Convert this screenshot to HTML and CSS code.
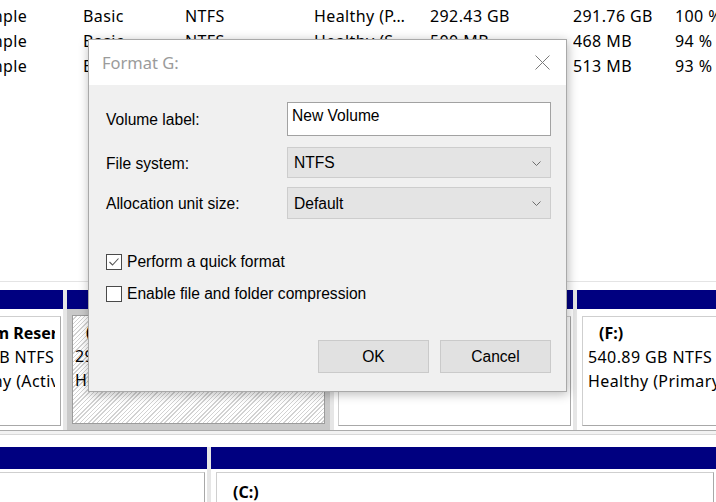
FILE: index.html
```html
<!DOCTYPE html>
<html lang="en">
<head>
<meta charset="utf-8">
<title>Format G:</title>
<link rel="stylesheet" href="styles.css">
</head>
<body>
<div class="screen">
  <div class="vol-list">
    <div class="vol-row"><span>Simple</span><span>Basic</span><span>NTFS</span><span>Healthy (P…</span><span>292.43 GB</span><span>291.76 GB</span><span>100 %</span></div>
    <div class="vol-row"><span>Simple</span><span>Basic</span><span>NTFS</span><span>Healthy (S…</span><span>500 MB</span><span>468 MB</span><span>94 %</span></div>
    <div class="vol-row"><span>Simple</span><span>Basic</span><span>NTFS</span><span>Healthy (R…</span><span>549 MB</span><span>513 MB</span><span>93 %</span></div>
  </div>

  <div class="disk-area">
    <div class="disk-row disk-row-1">
      <div class="part part-sys">
        <div class="part-head"></div>
        <div class="part-body">
          <div class="part-box">
            <div class="p-name">System Reserved</div>
            <div class="p-line">549 MB NTFS</div>
            <div class="p-line">Healthy (Active, Primary Partition)</div>
          </div>
        </div>
      </div>
      <div class="part part-g">
        <div class="part-head"></div>
        <div class="part-body part-body-sel">
          <div class="part-box part-box-hatch">
            <div class="p-name p-indent">(G:)</div>
            <div class="p-line">292.43 GB NTFS</div>
            <div class="p-line">Healthy (Primary Partition)</div>
          </div>
        </div>
      </div>
      <div class="part part-h">
        <div class="part-head"></div>
        <div class="part-body">
          <div class="part-box"></div>
        </div>
      </div>
      <div class="part part-f">
        <div class="part-head"></div>
        <div class="part-body">
          <div class="part-box">
            <div class="p-name p-indent">(F:)</div>
            <div class="p-line">540.89 GB NTFS</div>
            <div class="p-line">Healthy (Primary Partition)</div>
          </div>
        </div>
      </div>
    </div>
    <div class="disk-sep"></div>
    <div class="disk-row disk-row-2">
      <div class="part part-left">
        <div class="part-head"></div>
        <div class="part-body">
          <div class="part-box"></div>
        </div>
      </div>
      <div class="part part-c">
        <div class="part-head"></div>
        <div class="part-body">
          <div class="part-box">
            <div class="p-name p-indent">(C:)</div>
          </div>
        </div>
      </div>
    </div>
  </div>

  <div class="dialog">
    <div class="dlg-title">
      <span class="dlg-title-text">Format G:</span>
      <svg class="dlg-close" width="15" height="15" viewBox="0 0 15 15"><path d="M0.5 0.5L14.5 14.5M14.5 0.5L0.5 14.5" stroke="#7a7a7a" stroke-width="1" fill="none"/></svg>
    </div>
    <div class="dlg-body">
      <div class="form-row row-1">
        <span class="form-label">Volume label:</span>
        <div class="text-input">New Volume</div>
      </div>
      <div class="form-row row-2">
        <span class="form-label">File system:</span>
        <div class="select"><span>NTFS</span><svg width="9" height="5" viewBox="0 0 9 5"><path d="M0.5 0.5L4.5 4.5L8.5 0.5" stroke="#6d6d6d" fill="none"/></svg></div>
      </div>
      <div class="form-row row-3">
        <span class="form-label">Allocation unit size:</span>
        <div class="select"><span>Default</span><svg width="9" height="5" viewBox="0 0 9 5"><path d="M0.5 0.5L4.5 4.5L8.5 0.5" stroke="#6d6d6d" fill="none"/></svg></div>
      </div>
      <div class="check-row check-first">
        <span class="checkbox"><svg width="14" height="14" viewBox="0 0 14 14"><path d="M2.5 7L5.5 10L11.5 3.5" stroke="#555" stroke-width="1.1" fill="none"/></svg></span>
        <span>Perform a quick format</span>
      </div>
      <div class="check-row">
        <span class="checkbox"></span>
        <span>Enable file and folder compression</span>
      </div>
      <div class="btn-row">
        <div class="btn">OK</div>
        <div class="btn">Cancel</div>
      </div>
    </div>
  </div>
</div>
</body>
</html>
```

FILE: styles.css
```css
html, body {
  margin: 0;
  padding: 0;
  background: #fff;
}

.screen {
  position: relative;
  width: 716px;
  height: 502px;
  overflow: hidden;
  font-family: "Noto Sans", "Open Sans", sans-serif;
  font-size: 16px;
  letter-spacing: 0.4px;
  color: #000;
}

/* volume list */
.vol-list {
  height: 282px;
  box-sizing: border-box;
  padding-top: 4px;
  border-bottom: 1px solid #e4e4e4;
}

.vol-row {
  display: grid;
  grid-template-columns: 109px 102px 129px 116px 143px 102px 80px;
  margin-left: -26px;
  height: 25px;
  line-height: 25px;
  white-space: nowrap;
}

.vol-row span {
  overflow: hidden;
}

/* disk map */
.disk-area {
  padding-top: 8px;
}

.disk-row {
  display: flex;
  gap: 4px;
  background: #e6e6e6;
}

.disk-row-1 {
  height: 140px;
}

.disk-row-2 {
  height: 60px;
}

.part {
  display: flex;
  flex-direction: column;
  flex: none;
}

.part-head {
  height: 19px;
  background: #000080;
  flex: none;
}

.disk-row-2 .part-head {
  height: 22px;
}

.part-body {
  flex: 1;
  background: #fff;
  padding: 7px 2px 4px 5px;
  display: flex;
  min-height: 0;
}

.disk-row-2 .part-body {
  padding-top: 3px;
}

.part-box {
  flex: 1;
  min-width: 0;
  border: 1px solid #cfcfcf;
  border-right-color: #a8a8a8;
  border-bottom-color: #a8a8a8;
  padding: 4px 0 0 5px;
  overflow: hidden;
  white-space: nowrap;
  line-height: 24px;
}

.p-name,
.p-line {
  overflow: hidden;
}

.disk-row-2 .part-box {
  padding-top: 7px;
}

.p-name {
  font-weight: bold;
  letter-spacing: 0;
}

.p-indent {
  padding-left: 11px;
}

.part-sys {
  margin-left: -60px;
  width: 123px;
}

.part-sys .part-box {
  padding-right: 5px;
}

.part-g {
  width: 263px;
}

.part-body-sel {
  background: #c9c9c9;
  padding: 6px 5px 6px 5px;
}

.part-box-hatch {
  border-color: #9c9c9c;
  padding-left: 2px;
  background: repeating-linear-gradient(135deg, #fff 0 2px, #d2d2d2 2px 3px);
}

.part-h {
  width: 239px;
}

.part-h .part-body {
  padding-left: 4px;
}

.part-f {
  flex: 1;
}

.part-left {
  margin-left: -60px;
  width: 267px;
}

.part-c {
  flex: 1;
}

.disk-sep {
  height: 17px;
  background: linear-gradient(#ababab 0 1px, #f2f2f2 1px 4px, #d8d8d8 4px 5px, #fff 5px 100%);
}

/* dialog */
.dialog {
  position: absolute;
  left: 88px;
  top: 39px;
  width: 479px;
  height: 353px;
  box-sizing: border-box;
  border: 1px solid #a9a9a9;
  background: #f0f0f0;
  box-shadow: 1px 2px 10px rgba(0, 0, 0, 0.28);
  display: flex;
  flex-direction: column;
  letter-spacing: 0;
}

.dlg-title {
  height: 45px;
  flex: none;
  background: #fff;
  display: flex;
  align-items: center;
  justify-content: space-between;
  padding: 0 16px 0 13px;
}

.dlg-title-text {
  font-family: "Noto Sans", sans-serif;
  font-size: 16.5px;
  color: #9b9b9b;
}

.dlg-close {
  display: block;
}

.dlg-body {
  flex: 1;
  padding: 17px 15px 18px 17px;
  display: flex;
  flex-direction: column;
  font-family: "Liberation Sans", Arial, sans-serif;
  font-size: 15.6px;
  color: #000;
}

.form-row {
  display: flex;
  align-items: center;
}

.form-label {
  width: 181px;
  flex: none;
  padding-top: 2px;
}

.row-1 {
  height: 34px;
  margin-bottom: 11px;
}

.row-2 {
  height: 31px;
  margin-bottom: 9px;
}

.row-3 {
  height: 32px;
}

.text-input {
  width: 264px;
  height: 34px;
  box-sizing: border-box;
  border: 1px solid #a2a2a2;
  background: #fff;
  padding: 4px 4px 3px;
  line-height: 18px;
}

.select {
  width: 264px;
  height: 100%;
  box-sizing: border-box;
  border: 1px solid #cdcdcd;
  background: #e4e4e4;
  display: flex;
  align-items: center;
  justify-content: space-between;
  padding: 1px 9px 0 6px;
}

.select svg {
  display: block;
}

.check-row {
  display: flex;
  align-items: center;
  gap: 5px;
  height: 20px;
  margin-top: 12px;
}

.check-first {
  margin-top: 33px;
}

.checkbox {
  width: 16px;
  height: 16px;
  box-sizing: border-box;
  border: 1px solid #4a4a4a;
  background: #fff;
  display: flex;
  align-items: center;
  justify-content: center;
  flex: none;
}

.checkbox svg {
  display: block;
}

.btn-row {
  margin-top: auto;
  display: flex;
  justify-content: flex-end;
  gap: 11px;
}

.btn {
  width: 111px;
  height: 33px;
  box-sizing: border-box;
  border: 1px solid #cacaca;
  background: #e1e1e1;
  display: flex;
  align-items: center;
  justify-content: center;
  padding-top: 1px;
}
```
